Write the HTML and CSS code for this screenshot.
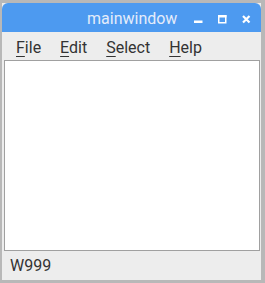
FILE: index.html
```html
<!DOCTYPE html>
<html>
<head>
<meta charset="utf-8">
<link rel="stylesheet" href="styles.css">
</head>
<body>
<div class="window">
  <div class="titlebar">
    <div class="title">mainwindow</div>
    <div class="controls">
      <svg class="btn" width="9" height="9" viewBox="0 0 9 9"><rect x="0" y="5.5" width="8.5" height="2.5" fill="#fff"/></svg>
      <svg class="btn" width="9" height="9" viewBox="0 0 9 9"><rect x="0.75" y="0.75" width="7" height="7" fill="none" stroke="#fff" stroke-width="1.5"/><rect x="0" y="0" width="8.5" height="2.5" fill="#fff"/></svg>
      <svg class="btn" width="9" height="9" viewBox="0 0 9 9"><path d="M1 1L7.5 7.5M7.5 1L1 7.5" stroke="#fff" stroke-width="2.2"/></svg>
    </div>
  </div>
  <div class="menubar">
    <span class="menu"><u>F</u>ile</span>
    <span class="menu"><u>E</u>dit</span>
    <span class="menu"><u>S</u>elect</span>
    <span class="menu"><u>H</u>elp</span>
  </div>
  <div class="content"></div>
  <div class="status">W999</div>
</div>
</body>
</html>
```
FILE: styles.css
```css
html, body {
  margin: 0;
  padding: 0;
}
body {
  background: #b8b8b8;
  width: 265px;
  height: 283px;
  overflow: hidden;
  font-family: Roboto, "Liberation Sans", sans-serif;
}
.window {
  margin: 3px 0 0 2px;
  width: 259px;
  height: 277px;
  display: flex;
  flex-direction: column;
  background: #ededed;
}
.titlebar {
  height: 29px;
  flex: none;
  background: #4d9af0;
  border-radius: 6px 6px 0 0;
  display: flex;
  align-items: flex-start;
}
.title {
  flex: none;
  margin-left: 85px;
  margin-top: 6px;
  color: #e4ecfa;
  font-size: 16px;
}
.controls {
  margin-left: auto;
  margin-top: 12px;
  margin-right: 10px;
  display: flex;
  gap: 15px;
}
.btn {
  display: block;
}
.menubar {
  height: 28px;
  flex: none;
  display: flex;
  align-items: center;
  padding-left: 14px;
  box-sizing: border-box;
  padding-top: 2px;
  font-size: 16px;
  color: #333;
}
.menu {
  margin-right: 19px;
}
.menu u {
  text-decoration-thickness: 1px;
  text-underline-offset: 3px;
}
.content {
  flex: 1;
  margin: 0 1px 0 2px;
  background: #fff;
  border: 1px solid #a0a0a0;
}
.status {
  height: 29px;
  flex: none;
  display: flex;
  align-items: center;
  padding-left: 8px;
  font-size: 16px;
  color: #333;
}
```
